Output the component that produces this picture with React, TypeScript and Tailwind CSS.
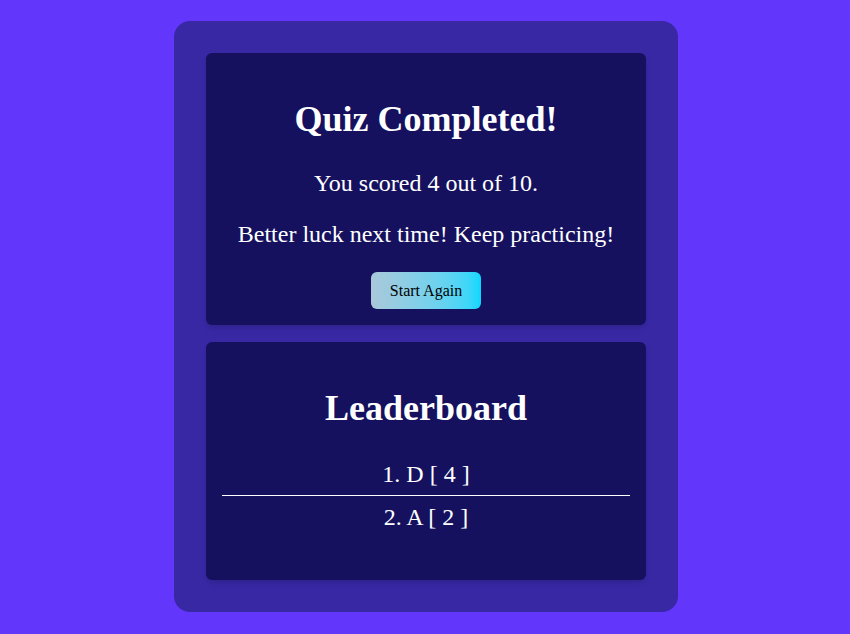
const leaders = [
  { name: 'D', score: 4 },
  { name: 'A', score: 2 },
];

export default function App() {
  return (
    <div
      className="min-h-[634px] w-full bg-[#6236fb] flex justify-center pl-[2px] pt-[21px] pb-[23px]"
      style={{ fontFamily: '"Liberation Serif", "Times New Roman", serif' }}
    >
      <div className="w-[504px] bg-[#3828a4] rounded-2xl p-8 flex flex-col gap-[17px]">
        {/* Result */}
        <div className="bg-[#15115e] rounded-md shadow-md p-4 text-center text-white">
          <h1 className="text-[36px] font-bold leading-[41px] mt-[30px] mb-[30px]">Quiz Completed!</h1>
          <p className="text-[24px] leading-[27px] mb-6">You scored 4 out of 10.</p>
          <p className="text-[24px] leading-[27px] mb-6">Better luck next time! Keep practicing!</p>
          <button className="w-[110px] h-[37px] rounded-md bg-gradient-to-r from-[#a9c8da] to-[#05d8fc] text-black text-[16px]">
            Start Again
          </button>
        </div>

        {/* Leaderboard */}
        <div className="bg-[#15115e] rounded-md shadow-md px-4 pt-4 pb-[41px] text-center text-white">
          <h1 className="text-[36px] font-bold leading-[41px] mt-[30px] mb-6">Leaderboard</h1>
          <ul>
            {leaders.map((l, i) => (
              <li
                key={l.name}
                className={`text-[24px] leading-[27px] pt-2 ${i < leaders.length - 1 ? 'pb-[7px] border-b border-white' : 'pb-2'}`}
              >
                {i + 1}. {l.name} [ {l.score} ]
              </li>
            ))}
          </ul>
        </div>
      </div>
    </div>
  );
}
